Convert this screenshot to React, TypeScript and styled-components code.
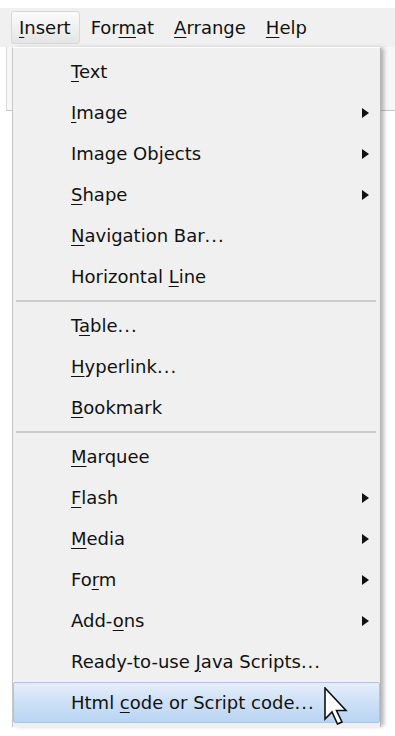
import React from "react";
import styled, { createGlobalStyle } from "styled-components";

const Global = createGlobalStyle`
  html, body { margin: 0; padding: 0; background: #ffffff; }
  #root { width: 395px; height: 736px; overflow: hidden; }
`;

const Screen = styled.div`
  position: relative;
  width: 395px;
  height: 736px;
  background: #ffffff;
  padding-top: 8px;
  box-sizing: border-box;
  font-family: "DejaVu Sans", "Liberation Sans", sans-serif;
  color: #111111;
`;

const MenuBar = styled.div`
  height: 39px;
  background: #f0f0f0;
  display: flex;
  align-items: center;
  gap: 3px;
  padding-left: 11px;
  box-sizing: border-box;
`;

const BarItem = styled.div<{ $open?: boolean }>`
  height: 33px;
  display: flex;
  align-items: center;
  padding: 0 8px 0 7px;
  font-size: 18px;
  border-radius: 3px;
  box-sizing: border-box;
  border: 1px solid ${(p) => (p.$open ? "#d8d8d8" : "transparent")};
  background: ${(p) =>
    p.$open ? "linear-gradient(#fbfbfb, #eeeeee 60%, #e4e4e4)" : "transparent"};
`;

const Toolbar = styled.div`
  height: 63px;
  margin-left: 6px;
  border-left: 1px solid #d8d8d8;
  border-bottom: 1px solid #c8c8c8;
  background: #f7f7f7;
`;

const Menu = styled.div`
  position: absolute;
  left: 12px;
  top: 47px;
  width: 369px;
  height: 680px;
  box-sizing: border-box;
  padding: 3px 0;
  background: #f0f0f0;
  border-left: 1px solid #c6c6c6;
  border-top: 1px solid #ffffff;
  border-right: 1px solid #b4b4b4;
  box-shadow: 4px 0 4px -1px rgba(0, 0, 0, 0.28);
  display: flex;
  flex-direction: column;
`;

const Row = styled.div<{ $hot?: boolean }>`
  height: 41px;
  display: flex;
  align-items: center;
  padding: 0 10px 0 57px;
  box-sizing: border-box;
  font-size: 18px;
  border: 1px solid ${(p) => (p.$hot ? "#a9c6ea" : "transparent")};
  border-radius: 2px;
  background: ${(p) =>
    p.$hot
      ? "linear-gradient(#e6effb, #cfe1f7 45%, #b9d4f3)"
      : "transparent"};
`;

const Label = styled.span`
  flex: 1;
  white-space: nowrap;
  padding-bottom: 1px;
`;

const Key = styled.span`
  text-decoration: underline;
  text-underline-offset: 3px;
  text-decoration-thickness: 1px;
`;

const Dots = styled.span`
  letter-spacing: 1px;
`;

const Separator = styled.div`
  height: 8px;
  display: flex;
  align-items: center;
  padding: 0 4px 0 3px;
  &::before {
    content: "";
    flex: 1;
    height: 2px;
    background: #cbcbcb;
  }
`;

const Arrow = () => (
  <svg width="7" height="10" viewBox="0 0 7 10">
    <polygon points="0,0 7,5 0,10" fill="#111" />
  </svg>
);

const Pointer = styled.svg`
  position: absolute;
  left: 324px;
  top: 687px;
`;

type Item =
  | { pre?: string; key?: string; post?: string; dots?: boolean; sub?: boolean; hot?: boolean }
  | "sep";

const items: Item[] = [
  { key: "T", post: "ext" },
  { key: "I", post: "mage", sub: true },
  { pre: "Image Objects", sub: true },
  { key: "S", post: "hape", sub: true },
  { key: "N", post: "avigation Bar", dots: true },
  { pre: "Horizontal ", key: "L", post: "ine" },
  "sep",
  { pre: "T", key: "a", post: "ble", dots: true },
  { key: "H", post: "yperlink", dots: true },
  { key: "B", post: "ookmark" },
  "sep",
  { key: "M", post: "arquee" },
  { key: "F", post: "lash", sub: true },
  { key: "M", post: "edia", sub: true },
  { pre: "Fo", key: "r", post: "m", sub: true },
  { pre: "Add-", key: "o", post: "ns", sub: true },
  { pre: "Ready-to-use ", key: "J", post: "ava Scripts", dots: true },
  { pre: "Html ", key: "c", post: "ode or Script code", dots: true, hot: true },
];

export default function App() {
  return (
    <>
      <Global />
      <Screen>
        <MenuBar>
          <BarItem $open>
            <span>
              <Key>I</Key>nsert
            </span>
          </BarItem>
          <BarItem>
            <span>
              For<Key>m</Key>at
            </span>
          </BarItem>
          <BarItem>
            <span>
              <Key>A</Key>rrange
            </span>
          </BarItem>
          <BarItem>
            <span>
              <Key>H</Key>elp
            </span>
          </BarItem>
        </MenuBar>
        <Toolbar />
        <Menu>
          {items.map((it, i) =>
            it === "sep" ? (
              <Separator key={i} />
            ) : (
              <Row key={i} $hot={it.hot}>
                <Label>
                  {it.pre}
                  {it.key && <Key>{it.key}</Key>}
                  {it.post}
                  {it.dots && <Dots>...</Dots>}
                </Label>
                {it.sub && <Arrow />}
              </Row>
            )
          )}
        </Menu>
        <Pointer width="24" height="38" viewBox="-1 -1 24 38">
          <path
            d="M0,0 L0,31 L7,24 L12.5,36 L17,34 L11.5,22.5 L21,22.5 Z"
            fill="#ffffff"
            stroke="#111111"
            strokeWidth="1.6"
            strokeLinejoin="miter"
          />
        </Pointer>
      </Screen>
    </>
  );
}
